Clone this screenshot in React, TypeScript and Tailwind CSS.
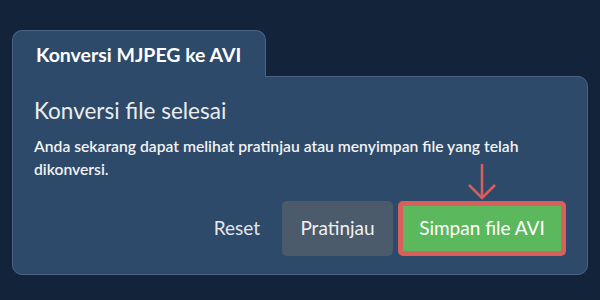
import React from "react";

export default function App() {
  return (
    <div
      className="w-[600px] h-[300px] bg-[#12233a] pt-[30px] pl-[12px]"
      style={{ fontFamily: "Lato, 'Noto Sans', sans-serif" }}
    >
      <div className="relative z-10 -mb-px w-[254px] h-[47px] rounded-t-[10px] border border-b-0 border-[#4a6483] bg-[#2d4a6a] pl-[23px] pt-[12px]">
        <span className="text-[19.5px] font-bold text-white leading-[24px]">Konversi MJPEG ke AVI</span>
      </div>
      <div className="w-[576px] h-[199px] rounded-b-[10px] rounded-tr-[10px] border border-[#4a6483] bg-[#2d4a6a] pl-[21px] pr-[21px] pt-[19px]">
        <div className="text-[22.5px] leading-[30px] text-[#ececec]">Konversi file selesai</div>
        <p className="mt-[9px] w-[520px] text-[15.7px] leading-[23px] font-semibold text-[#f2f2f2]">
          Anda sekarang dapat melihat pratinjau atau menyimpan file yang telah dikonversi.
        </p>
        <div className="mt-[20px] flex items-center justify-end">
          <span className="mr-[22px] text-[19px] text-[#e6e6e6]">Reset</span>
          <div className="flex h-[55px] w-[111px] items-center justify-center rounded-[5px] bg-[#4b5b6c] text-[19px] text-[#f0f0f0]">
            Pratinjau
          </div>
          <div className="relative ml-[5px] flex h-[55px] w-[168px] items-center justify-center rounded-[5px] border-[5px] border-[#d9605a] bg-[#5cb85c] text-[19px] text-white">
            Simpan file AVI
            <svg
              className="absolute left-1/2 -translate-x-1/2 -top-[44px]"
              width="32"
              height="40"
              viewBox="0 0 32 40"
              fill="none"
              stroke="#d9605a"
              strokeWidth="2.5"
            >
              <line x1="16" y1="2" x2="16" y2="36" />
              <polyline points="3,23 16,36 29,23" />
            </svg>
          </div>
        </div>
      </div>
    </div>
  );
}
